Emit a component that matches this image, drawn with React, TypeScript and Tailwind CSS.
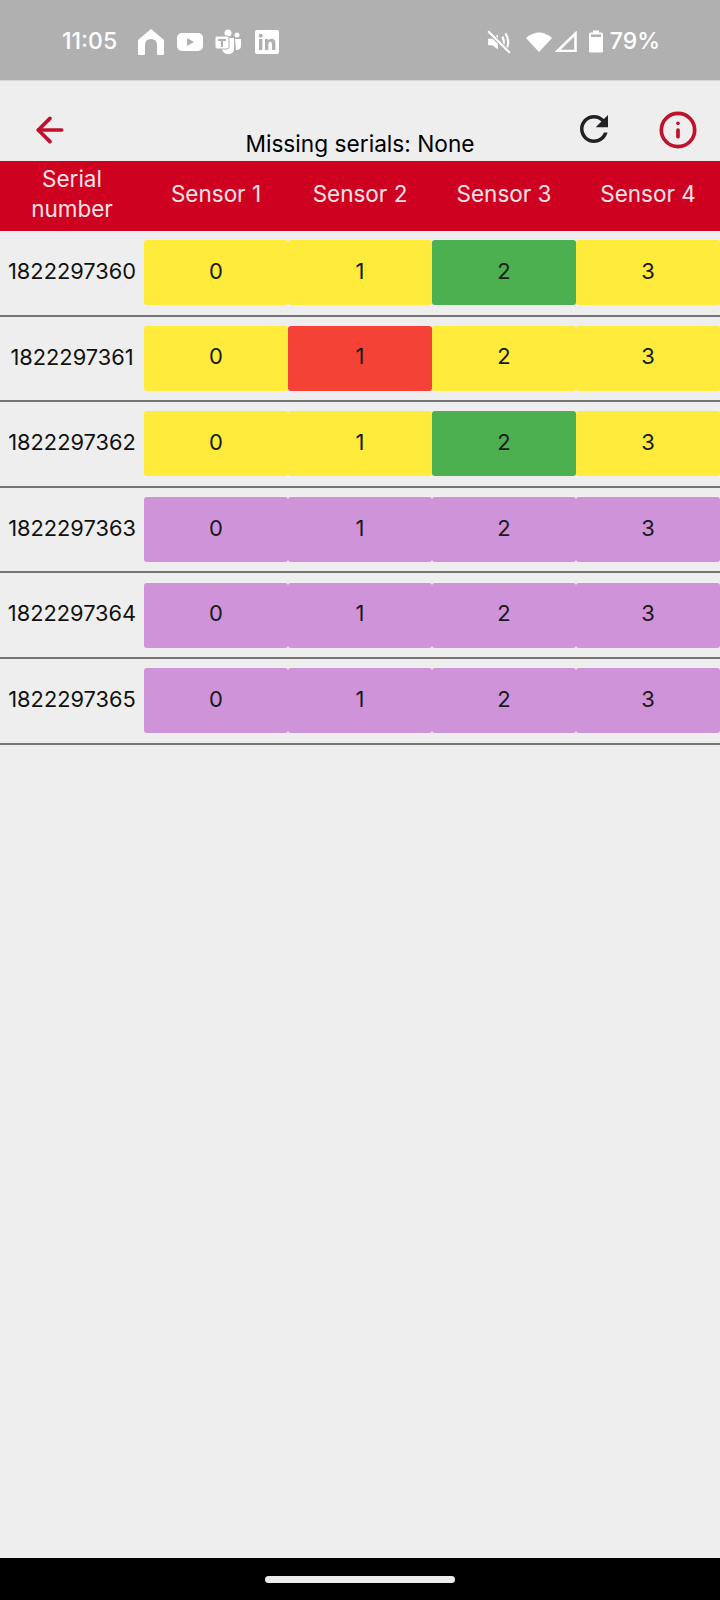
import { ArrowLeft, Info } from "lucide-react";

const rows = [
  { serial: "1822297360", cells: ["y", "y", "g", "y"] },
  { serial: "1822297361", cells: ["y", "r", "y", "y"] },
  { serial: "1822297362", cells: ["y", "y", "g", "y"] },
  { serial: "1822297363", cells: ["p", "p", "p", "p"] },
  { serial: "1822297364", cells: ["p", "p", "p", "p"] },
  { serial: "1822297365", cells: ["p", "p", "p", "p"] },
];

const cellColor: Record<string, string> = {
  y: "bg-[#ffeb3b]",
  r: "bg-[#f44336]",
  g: "bg-[#4caf50]",
  p: "bg-[#ce93d8]",
};

const StatusLeftIcons = () => (
  <div className="flex items-center">
    <svg width="28" height="28" viewBox="0 0 28 28" className="ml-[20px]" fill="white">
      <path d="M14 1 L27 12 V26 Q27 27 26 27 H21 Q20 27 20 26 V17 Q20 11 14 11 Q8 11 8 17 V26 Q8 27 7 27 H2 Q1 27 1 26 V12 Z" />
    </svg>
    <svg width="28" height="20" viewBox="0 0 28 20" className="ml-[11px]">
      <rect x="1" y="1" width="26" height="18" rx="5" fill="white" />
      <path d="M11 6 L18 10 L11 14 Z" fill="#b0b0b0" />
    </svg>
    <svg width="28" height="26" viewBox="0 0 28 26" className="ml-[10px]" fill="white">
      <circle cx="14" cy="4" r="3.5" />
      <circle cx="23" cy="6" r="2.5" />
      <path d="M8 9 H20 V20 Q20 25 14 25 Q9 25 8 20 Z" />
      <path d="M21 10 H27 V17 Q27 21 22 21 Z" />
      <rect x="1" y="7" width="14" height="13" rx="2" fill="white" stroke="#b0b0b0" />
      <path d="M4 10 H12 V12 H9 V18 H7 V12 H4 Z" fill="#b0b0b0" />
    </svg>
    <svg width="24" height="24" viewBox="0 0 24 24" className="ml-[13px]">
      <rect width="24" height="24" rx="2" fill="white" />
      <rect x="4" y="9" width="3.4" height="11" fill="#b0b0b0" />
      <circle cx="5.7" cy="5.7" r="2" fill="#b0b0b0" />
      <path d="M10 9 H13.2 V10.6 Q14.2 8.8 16.6 8.8 Q20.4 8.8 20.4 13.2 V20 H17 V14 Q17 11.8 15.3 11.8 Q13.4 11.8 13.4 14 V20 H10 Z" fill="#b0b0b0" />
    </svg>
  </div>
);

const StatusRightIcons = () => (
  <div className="flex items-center">
    <svg width="26" height="26" viewBox="0 0 24 24" fill="none" stroke="white" strokeWidth="2">
      <path d="M2 9 H6 L11 5 V19 L6 15 H2 Z" fill="white" stroke="none" />
      <path d="M15 7 Q18 12 15 17" />
      <path d="M18 4 Q23 12 18 20" />
      <path d="M2 2 L22 22" stroke="#b0b0b0" strokeWidth="4" />
      <path d="M2 2 L22 22" />
    </svg>
    <svg width="26" height="20" viewBox="0 0 26 20" fill="white" className="ml-[14px]">
      <path d="M0 6 Q13 -5 26 6 L13 20 Z" />
    </svg>
    <svg width="22" height="21" viewBox="0 0 22 21" className="ml-[3px]" fill="none" stroke="white" strokeWidth="2.6">
      <path d="M20.5 2.5 V20 H2.5 Z" strokeLinejoin="miter" />
    </svg>
    <svg width="14" height="23" viewBox="0 0 14 22" fill="white" className="ml-[12px]">
      <path d="M4 0 H10 V2 H12.5 Q14 2 14 3.5 V20.5 Q14 22 12.5 22 H1.5 Q0 22 0 20.5 V3.5 Q0 2 1.5 2 H4 Z" />
      <rect x="2" y="4" width="10" height="2.5" fill="#b0b0b0" />
    </svg>
  </div>
);

export default function App() {
  return (
    <div className="flex h-[1600px] w-[720px] flex-col overflow-hidden bg-[#eeeeee] font-['Inter',sans-serif] text-black">
      <div className="flex h-[80px] items-center justify-between bg-[#b0b0b0] pl-[62px] pr-[60px] pt-[3px] text-white">
        <div className="flex items-center">
          <span className="text-[23px] font-medium">11:05</span>
          <StatusLeftIcons />
        </div>
        <div className="flex items-center">
          <StatusRightIcons />
          <span className="ml-[7px] text-[23px] font-medium">79%</span>
        </div>
      </div>

      <div className="grid h-[81px] grid-cols-[147px_1fr_147px] border-t border-[#d8d8d8]">
        <div className="pl-[30px] pt-[29px]">
          <ArrowLeft className="size-[40px] text-[#c0112c]" strokeWidth={2.2} />
        </div>
        <div className="pt-[49px] text-center text-[22.7px] leading-[28px]">Missing serials: None</div>
        <div className="flex items-start pt-[27px]">
          <svg width="42" height="42" viewBox="0 0 24 24" fill="#1f2124">
            <path d="M17.65 6.35C16.2 4.9 14.21 4 12 4c-4.42 0-7.99 3.58-7.99 8s3.57 8 7.99 8c3.73 0 6.84-2.55 7.73-6h-2.08c-.82 2.33-3.04 4-5.65 4-3.31 0-6-2.69-6-6s2.69-6 6-6c1.66 0 3.14.69 4.22 1.78L13 11h7V4l-2.35 2.35z" />
          </svg>
          <Info className="ml-[43px] mt-[2px] size-[40px] text-[#c0112c]" strokeWidth={2.2} />
        </div>
      </div>

      <div className="flex h-[70px] items-center bg-[#cf0120] pb-[5px] text-center text-[22.5px] leading-[29.5px] text-[#fbe3e6]">
        <div className="w-[144px]">
          Serial
          <br />
          number
        </div>
        <div className="w-[144px]">Sensor 1</div>
        <div className="w-[144px]">Sensor 2</div>
        <div className="w-[144px]">Sensor 3</div>
        <div className="w-[144px]">Sensor 4</div>
      </div>

      {rows.map((row) => (
        <div key={row.serial} className="flex h-[85.6px] items-center border-b-2 border-[#757575]">
          <div className="w-[144px] pb-[3px] text-center text-[21.8px] text-[#111111]">{row.serial}</div>
          {row.cells.map((c, i) => (
            <div
              key={i}
              className={`flex h-[65px] w-[144px] items-center justify-center rounded-[3px] pb-[3px] text-[22px] text-[#1a1a1a] ${cellColor[c]}`}
            >
              {i}
            </div>
          ))}
        </div>
      ))}

      <div className="flex-1" />

      <div className="flex h-[42px] items-center justify-center bg-black">
        <div className="h-[7px] w-[190px] rounded-full bg-[#ececec]" />
      </div>
    </div>
  );
}
